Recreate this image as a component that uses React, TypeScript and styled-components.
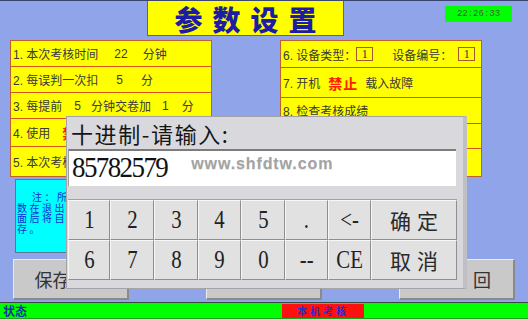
import React from "react";
import styled, { createGlobalStyle } from "styled-components";

const Global = createGlobalStyle`
  html, body { margin: 0; padding: 0; }
  body {
    width: 528px; height: 319px; overflow: hidden;
    background: #90a4ea;
    font-family: "Liberation Sans", "Noto Sans CJK SC", sans-serif;
  }
`;

const Screen = styled.div`
  position: relative;
  width: 528px;
  height: 319px;
  background: #90a4ea;
  display: flex;
  flex-direction: column;
  overflow: hidden;
`;

const Header = styled.div`
  height: 39px;
  border-top: 1px solid #3a4570;
  display: flex;
  align-items: flex-start;
`;

const TitleBox = styled.div`
  margin-left: 147px;
  width: 197px;
  height: 35px;
  box-sizing: border-box;
  background: #ffff00;
  border: 1px solid #b04a2c;
  border-top: none;
  text-align: center;
  font-family: "Noto Sans CJK SC", sans-serif;
  font-weight: 900;
  font-size: 28px;
  line-height: 36px;
  letter-spacing: 10px;
  padding-left: 10px;
  color: #1c1ca4;
`;

const Clock = styled.div`
  margin-left: auto;
  margin-right: 16px;
  margin-top: 5px;
  width: 67px;
  height: 16px;
  background: #00ff00;
  display: flex;
  align-items: center;
  justify-content: center;
  font-family: "Liberation Mono", monospace;
  font-size: 9px;
  color: #3d5f3d;
`;

const Main = styled.div`
  display: flex;
  padding-left: 10px;
  gap: 68px;
`;

const Panel = styled.div`
  width: 202px;
  height: 137px;
  box-sizing: border-box;
  background: #ffff00;
  border: 1px solid #c0602a;
  display: flex;
  flex-direction: column;
`;

const Row = styled.div<{ $h: number }>`
  height: ${(p) => p.$h}px;
  flex: none;
  box-sizing: border-box;
  border-bottom: 1px solid #dc5416;
  &:last-child { border-bottom: none; flex: 1; }
  display: flex;
  align-items: center;
  padding-left: 2px;
  font-size: 12px;
  color: #3a3a3a;
  white-space: nowrap;
`;

const Seg = styled.span<{ $ml?: number }>`
  margin-left: ${(p) => p.$ml ?? 0}px;
`;

const Warn = styled.span<{ $ml?: number }>`
  margin-left: ${(p) => p.$ml ?? 0}px;
  color: #ff1a00;
  font-weight: 700;
  font-size: 14px;
  letter-spacing: 1px;
  font-family: "Noto Sans CJK SC", sans-serif;
`;

const NumBox = styled.span<{ $ml: number }>`
  margin-left: ${(p) => p.$ml}px;
  width: 17px;
  height: 14px;
  box-sizing: border-box;
  border: 1px solid #a8582a;
  display: inline-flex;
  align-items: center;
  justify-content: center;
  font-family: "Liberation Serif", serif;
  font-size: 12px;
  color: #333;
`;

const Note = styled.div`
  margin-top: 2px;
  margin-left: 15px;
  width: 85px;
  height: 74px;
  box-sizing: border-box;
  background: #00ffff;
  border: 1px solid #5a7896;
  padding: 12px 2px 0 1px;
  font-family: "Noto Sans CJK SC", sans-serif;
  font-size: 10px;
  line-height: 10.5px;
  letter-spacing: 2.5px;
  color: #1430d0;
`;

const Indent = styled.span`
  margin-left: 15px;
`;

const ButtonRow = styled.div`
  margin-top: 6px;
  padding-left: 13px;
  display: flex;
  gap: 77px;
`;

const PanelButton = styled.div<{ $spread?: boolean }>`
  width: 116px;
  height: 41px;
  box-sizing: border-box;
  background: #c9c9c9;
  border-top: 1px solid #ececec;
  border-left: 1px solid #ececec;
  border-right: 2px solid #8a8a8a;
  border-bottom: 2px solid #8a8a8a;
  display: flex;
  align-items: center;
  justify-content: center;
  padding-left: ${(p) => (p.$spread ? 33 : 0)}px;
  letter-spacing: ${(p) => (p.$spread ? 7 : 0)}px;
  font-family: "Noto Sans CJK SC", sans-serif;
  font-size: 18px;
  color: #333;
`;

const StatusBar = styled.div`
  margin-top: 2px;
  height: 17px;
  box-sizing: border-box;
  background: #00ff00;
  border-top: 1px solid #3a4a3a;
  border-bottom: 1px solid #20a020;
  display: flex;
  align-items: center;
  padding-left: 3px;
  font-family: "Noto Sans CJK SC", sans-serif;
  font-weight: 700;
  font-size: 12px;
  color: #1434a0;
`;

const StatusTag = styled.div`
  margin-left: 255px;
  width: 82px;
  height: 14px;
  background: #ff1010;
  display: flex;
  align-items: center;
  justify-content: center;
  font-size: 10px;
  font-weight: 700;
  letter-spacing: 3px;
  color: #2a2ad0;
`;

/* ---------- dialog overlay ---------- */

const Dialog = styled.div`
  position: absolute;
  left: 66px;
  top: 116px;
  width: 401px;
  height: 173px;
  box-sizing: border-box;
  background: #d9d9dd;
  border: 1px solid #a4a4a8;
  border-right: 4px solid #c0c0c4;
  padding: 0 7px 0 1px;
  display: flex;
  flex-direction: column;
`;

const DialogTitle = styled.div`
  height: 32px;
  display: flex;
  align-items: center;
  padding-left: 3px;
  font-family: "Noto Sans CJK SC", sans-serif;
  font-size: 22px;
  letter-spacing: 1.6px;
  color: #151515;
`;

const InputBox = styled.div`
  height: 37px;
  box-sizing: border-box;
  background: #ffffff;
  border-top: 2px solid #7c7c7c;
  border-left: 1px solid #9c9c9c;
  display: flex;
  align-items: flex-start;
  padding: 1px 0 0 3px;
`;

const InputValue = styled.span`
  font-family: "Liberation Serif", serif;
  font-size: 27px;
  letter-spacing: -1.6px;
  line-height: 28px;
  color: #111;
  display: inline-block;
  transform: scaleY(1.08);
  transform-origin: top left;
`;

const Watermark = styled.span`
  margin-left: 24px;
  margin-top: 3px;
  font-family: "Liberation Sans", sans-serif;
  font-weight: 700;
  font-size: 16px;
  letter-spacing: 0.9px;
  color: #a3a3a3;
  text-shadow: 0 1px 0 #e6e6e6;
`;

const Keypad = styled.div`
  margin-top: 13px;
  display: grid;
  grid-template-columns: 42px 44px 44px 43px 44px 43px 43px 86px;
  grid-template-rows: 40px 40px;
  border-top: 1px solid #a0a0a0;
  width: 389px;
`;

const Key = styled.div`
  box-sizing: border-box;
  background: #e1e1e1;
  border-top: 1px solid #f6f6f6;
  border-left: 1px solid #f6f6f6;
  border-right: 1px solid #8e8e8e;
  border-bottom: 1px solid #8e8e8e;
  display: flex;
  align-items: center;
  justify-content: center;
  color: #222;
  overflow: hidden;
`;

const KeyGlyph = styled.span`
  font-family: "Liberation Serif", serif;
  font-size: 26px;
  display: inline-block;
  transform: scaleX(0.8);
`;

const KeyWord = styled.span`
  font-family: "Noto Sans CJK SC", sans-serif;
  font-size: 21px;
  letter-spacing: 6px;
  padding-left: 6px;
  color: #2a2a2a;
`;

const leftRows = [26, 26, 26, 28, 31];
const rightRows = [27, 30, 26, 25, 29];

const keys: { label: string; word?: boolean }[] = [
  { label: "1" }, { label: "2" }, { label: "3" }, { label: "4" }, { label: "5" },
  { label: "." }, { label: "<-" }, { label: "确定", word: true },
  { label: "6" }, { label: "7" }, { label: "8" }, { label: "9" }, { label: "0" },
  { label: "--" }, { label: "CE" }, { label: "取消", word: true },
];

export default function App() {
  return (
    <Screen>
      <Global />
      <Header>
        <TitleBox>参数设置</TitleBox>
        <Clock>22:26:33</Clock>
      </Header>

      <Main>
        <Panel>
          <Row $h={leftRows[0]}>
            <Seg>1. 本次考核时间</Seg>
            <Seg $ml={16}>22</Seg>
            <Seg $ml={15}>分钟</Seg>
          </Row>
          <Row $h={leftRows[1]}>
            <Seg>2. 每误判一次扣</Seg>
            <Seg $ml={18}>5</Seg>
            <Seg $ml={18}>分</Seg>
          </Row>
          <Row $h={leftRows[2]}>
            <Seg>3. 每提前</Seg>
            <Seg $ml={12}>5</Seg>
            <Seg $ml={10}>分钟交卷加</Seg>
            <Seg $ml={11}>1</Seg>
            <Seg $ml={13}>分</Seg>
          </Row>
          <Row $h={leftRows[3]}>
            <Seg>4. 使用</Seg>
            <Warn $ml={12}>禁止</Warn>
            <Seg $ml={8}>错误提示</Seg>
          </Row>
          <Row $h={leftRows[4]}>
            <Seg>5. 本次考核成绩清零</Seg>
          </Row>
        </Panel>

        <Panel>
          <Row $h={rightRows[0]}>
            <Seg>6. 设备类型：</Seg>
            <NumBox $ml={0}>1</NumBox>
            <Seg $ml={19}>设备编号：</Seg>
            <NumBox $ml={6}>1</NumBox>
          </Row>
          <Row $h={rightRows[1]}>
            <Seg>7. 开机</Seg>
            <Warn $ml={8}>禁止</Warn>
            <Seg $ml={7}>载入故障</Seg>
          </Row>
          <Row $h={rightRows[2]}>
            <Seg>8. 检查考核成绩</Seg>
          </Row>
          <Row $h={rightRows[3]}>
            <Seg>9. 故障设置</Seg>
          </Row>
          <Row $h={rightRows[4]}>
            <Seg>10. 系统复位</Seg>
          </Row>
        </Panel>
      </Main>

      <Note>
        <Indent>注：所有参</Indent>
        <br />
        数在退出此画
        <br />
        面后将自动保
        <br />
        存。
      </Note>

      <ButtonRow>
        <PanelButton>保存参数</PanelButton>
        <PanelButton>恢复默认</PanelButton>
        <PanelButton $spread>返回</PanelButton>
      </ButtonRow>

      <StatusBar>
        状态
        <StatusTag>本机考核</StatusTag>
      </StatusBar>

      <Dialog>
        <DialogTitle>十进制-请输入:</DialogTitle>
        <InputBox>
          <InputValue>85782579</InputValue>
          <Watermark>www.shfdtw.com</Watermark>
        </InputBox>
        <Keypad>
          {keys.map((k) => (
            <Key key={k.label}>
              {k.word ? <KeyWord>{k.label}</KeyWord> : <KeyGlyph>{k.label}</KeyGlyph>}
            </Key>
          ))}
        </Keypad>
      </Dialog>
    </Screen>
  );
}
